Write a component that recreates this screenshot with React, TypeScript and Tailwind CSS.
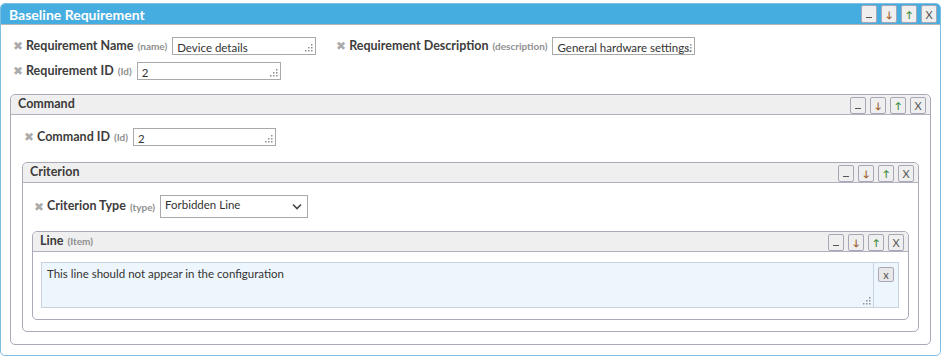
import React from "react";

const font = { fontFamily: "Lato, 'Noto Sans', sans-serif" };

function Grip() {
  return (
    <svg className="absolute right-[2px] bottom-[2px]" width="8" height="8" viewBox="0 0 8 8">
      <rect x="6" y="0" width="1.5" height="1.5" fill="#8f8f8f" />
      <rect x="3" y="3" width="1.5" height="1.5" fill="#8f8f8f" />
      <rect x="6" y="3" width="1.5" height="1.5" fill="#8f8f8f" />
      <rect x="0" y="6" width="1.5" height="1.5" fill="#8f8f8f" />
      <rect x="3" y="6" width="1.5" height="1.5" fill="#8f8f8f" />
      <rect x="6" y="6" width="1.5" height="1.5" fill="#8f8f8f" />
    </svg>
  );
}

function HeadButtons({ big = false }: { big?: boolean }) {
  const base =
    (big ? "h-[18px]" : "h-[17px]") +
    " w-[16px] flex items-center justify-center bg-[#efefef] border border-[#a9a7b7] rounded-[2px] leading-none";
  return (
    <div className="flex gap-[4px]">
      <div className={base}>
        <span className="block w-[6px] h-[1px] bg-[#555] mt-[6px]" />
      </div>
      <div className={base + " text-[#9a5a2a] text-[9px] font-bold"}>↓</div>
      <div className={base + " text-[#3b8a3b] text-[9px] font-bold"}>↑</div>
      <div className={base + " text-[#555] text-[11px]"}>X</div>
    </div>
  );
}

function Label({ label, hint }: { label: string; hint: string }) {
  return (
    <>
      <span className="text-[#ababab] text-[12px] leading-none mr-[3px]">✖</span>
      <span className="text-[#3d3d3d] text-[12.5px] leading-none font-bold">{label}</span>
      <span className="text-[#909090] text-[10px] leading-none font-bold ml-[4px] mr-[5px]">{hint}</span>
    </>
  );
}

function Field({
  label,
  hint,
  value,
  width,
}: {
  label: string;
  hint: string;
  value: string;
  width: string;
}) {
  return (
    <div className="flex items-center h-[18px]">
      <Label label={label} hint={hint} />
      <div className={width + " relative h-[18px] border border-[#a9a9a9] bg-white"}>
        <textarea
          readOnly
          rows={1}
          defaultValue={value}
          className="w-full h-full text-[11.5px] leading-[16px] text-[#333] pl-[4px] pr-[6px] pt-0 resize-none overflow-hidden whitespace-nowrap"
        />
        <Grip />
      </div>
    </div>
  );
}

function Panel({
  title,
  hint,
  children,
}: {
  title: string;
  hint?: string;
  children: React.ReactNode;
}) {
  return (
    <div className="border border-[#aaa8b9] rounded-[5px] bg-white">
      <div className="h-[20px] flex items-center justify-between bg-[#efefef] border-b border-[#b2b0be] rounded-t-[5px] pl-[7px] pr-[4px]">
        <div className="flex items-baseline">
          <span className="text-[12.5px] font-bold text-[#3a3a3a]">{title}</span>
          {hint && <span className="text-[10px] font-bold text-[#8e8e8e] ml-[4px]">{hint}</span>}
        </div>
        <div className="pt-[2px]">
          <HeadButtons />
        </div>
      </div>
      {children}
    </div>
  );
}

export default function App() {
  return (
    <div className="w-[942px] h-[357px] bg-white pt-[3px]" style={font}>
      <div className="w-[941px] h-[353px] border border-[#7fbde3] rounded-[5px] bg-white">
        <div className="h-[21px] bg-[#45ade0] border-b border-[#b5b5b5] rounded-t-[4px] flex items-center justify-between pl-[8px] pr-[3px]">
          <span className="text-white text-[14px] font-bold">Baseline Requirement</span>
          <HeadButtons big />
        </div>
        <div className="px-[9px] pt-[12px]">
          <div className="pl-[3px] flex flex-col gap-[7px]">
            <div className="flex items-center gap-[20px]">
              <Field label="Requirement Name" hint="(name)" value="Device details" width="w-[144px]" />
              <Field
                label="Requirement Description"
                hint="(description)"
                value="General hardware settings."
                width="w-[143px]"
              />
            </div>
            <Field label="Requirement ID" hint="(Id)" value="2" width="w-[144px]" />
          </div>

          <div className="mt-[14px]">
            <Panel title="Command">
              <div className="px-[11px] pt-[13px] pb-[12px]">
                <div className="pl-[2px]">
                  <Field label="Command ID" hint="(Id)" value="2" width="w-[143px]" />
                </div>
                <div className="mt-[16px]">
                  <Panel title="Criterion">
                    <div className="px-[9px] pt-[12px] pb-[11px]">
                      <div className="flex items-center h-[23px] pl-[2px]">
                        <Label label="Criterion Type" hint="(type)" />
                        <div className="w-[148px] h-[23px] border border-[#a9a9a9] bg-white flex items-center justify-between pl-[4px] pr-[5px]">
                          <span className="text-[11.5px] leading-none text-[#333] -mt-[3px]">Forbidden Line</span>
                          <svg width="10" height="7" viewBox="0 0 10 7">
                            <path d="M1 1.5 L5 5.5 L9 1.5" stroke="#444" strokeWidth="1.6" fill="none" />
                          </svg>
                        </div>
                      </div>
                      <div className="mt-[13px]">
                        <Panel title="Line" hint="(Item)">
                          <div className="pl-[8px] pr-[9px] pt-[10px] pb-[11px]">
                            <div className="flex border border-[#c9d3df] bg-[#eef6fd] h-[46px]">
                              <div className="relative flex-1 h-full">
                                <textarea
                                  readOnly
                                  defaultValue="This line should not appear in the configuration"
                                  className="w-full h-full bg-[#eef6fd] text-[11.5px] leading-[15px] text-[#333] px-[5px] pt-[3px] resize-none overflow-hidden"
                                />
                                <Grip />
                              </div>
                              <div className="w-[25px] border-l border-[#c9d3df] flex justify-center pt-[4px]">
                                <div className="w-[16px] h-[15px] bg-[#e8e8e8] border border-[#a9a7b7] rounded-[2px] flex items-center justify-center text-[11px] text-[#555] leading-none">
                                  x
                                </div>
                              </div>
                            </div>
                          </div>
                        </Panel>
                      </div>
                    </div>
                  </Panel>
                </div>
              </div>
            </Panel>
          </div>
        </div>
      </div>
    </div>
  );
}
